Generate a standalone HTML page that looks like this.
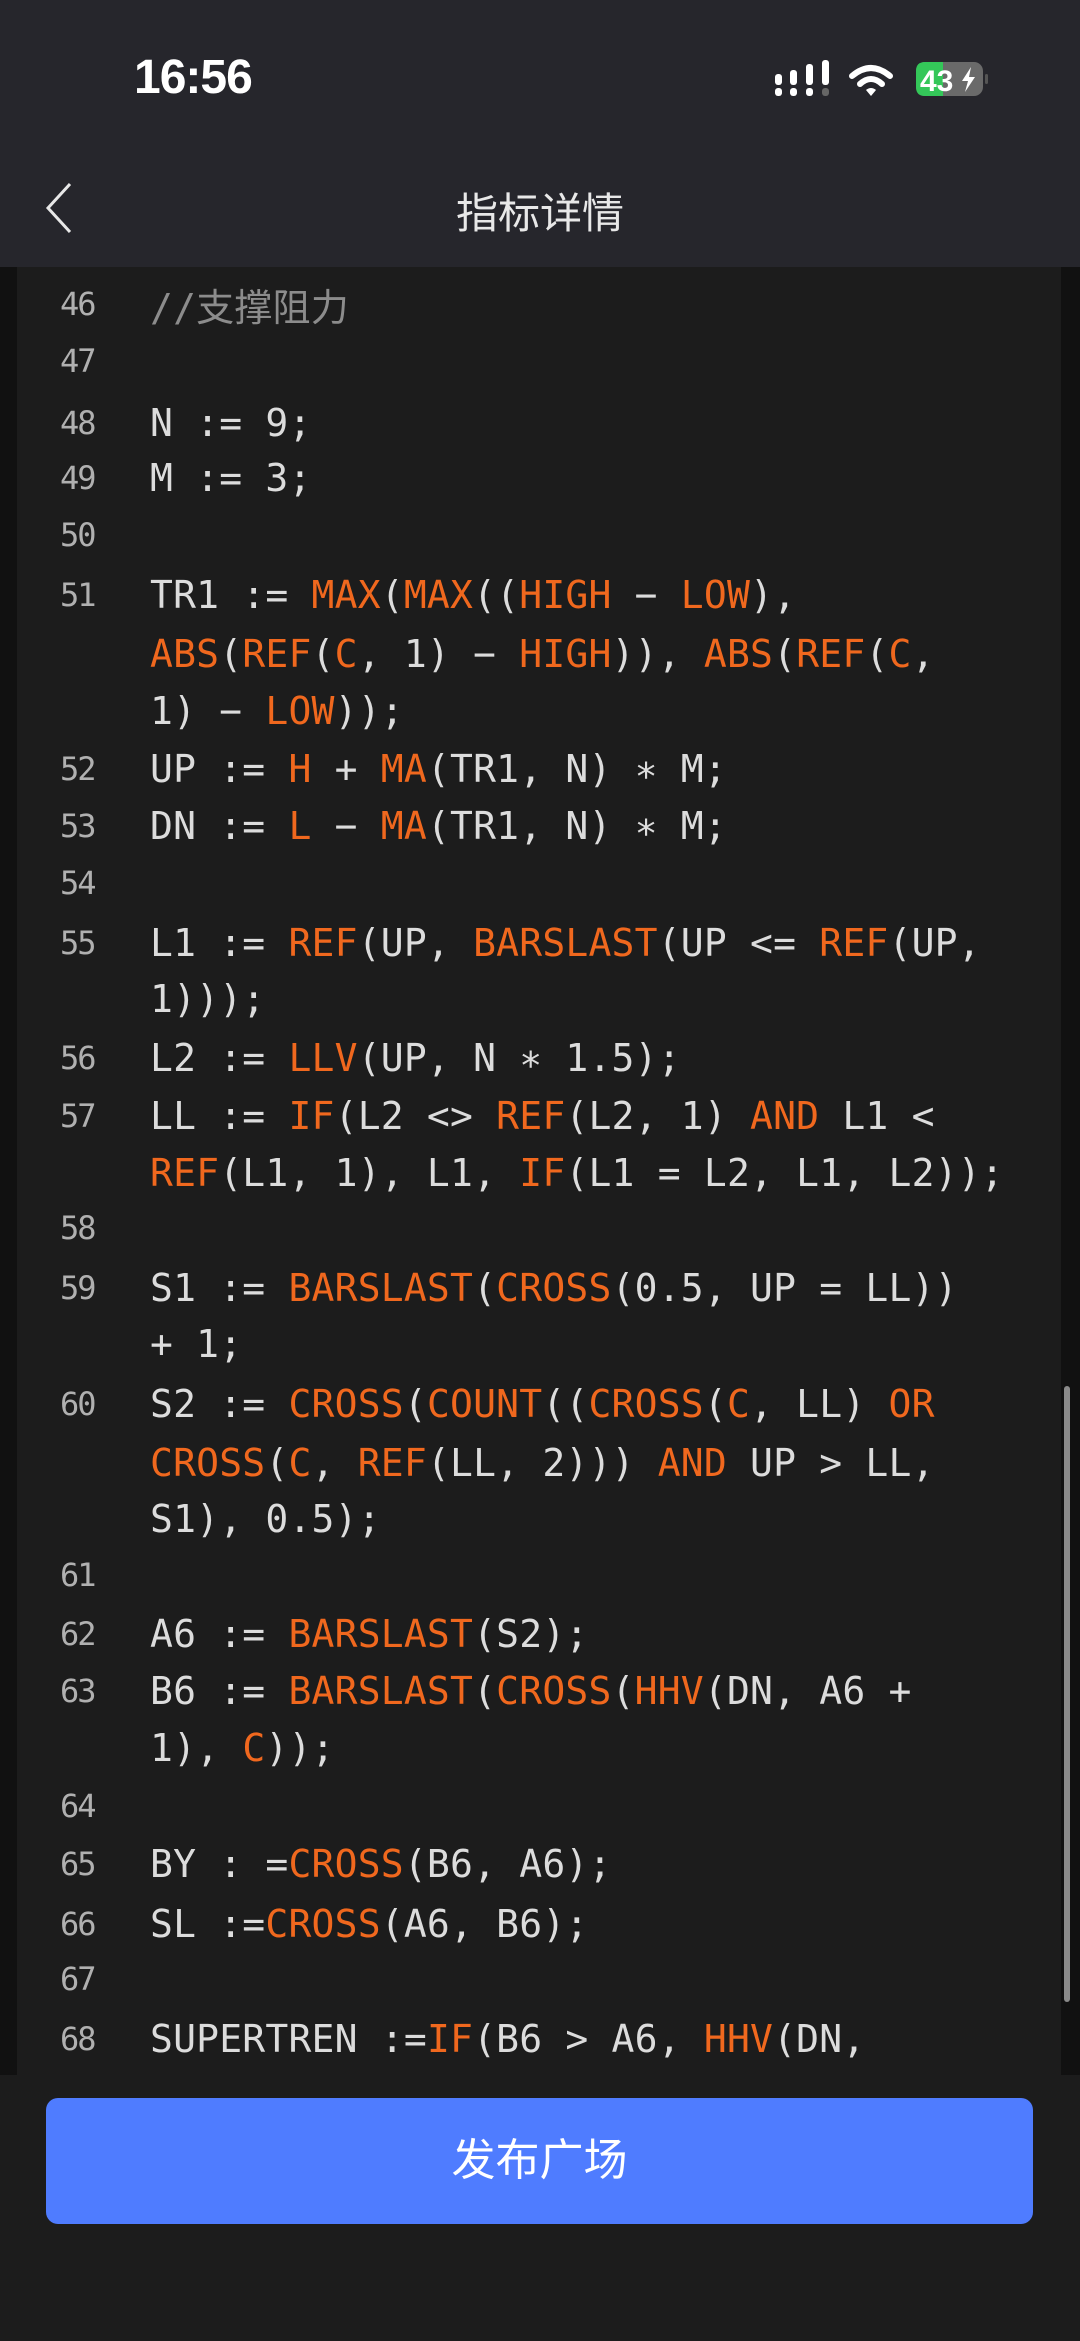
<!DOCTYPE html>
<html><head><meta charset="utf-8"><style>
*{margin:0;padding:0;box-sizing:border-box}
body{width:1080px;height:2341px;background:#1c1c1c;position:relative;overflow:hidden;font-family:"Liberation Sans","Noto Sans CJK SC",sans-serif}
.top{position:absolute;left:0;top:0;width:1080px;height:267px;background:#26262c}
.time{position:absolute;left:134px;top:50px;font-size:48px;font-weight:bold;color:#fff;letter-spacing:-1px}
.title{position:absolute;left:0;width:1080px;top:180px;text-align:center;color:#e8e8e8;font-size:42px}
.panel{position:absolute;left:17px;top:267px;width:1044px;height:1808px;background:#1c1c1c}
.lside{position:absolute;left:0;top:267px;width:17px;height:1808px;background:#111}
.rside{position:absolute;left:1061px;top:267px;width:19px;height:1808px;background:#111}
.r{position:absolute;left:150px;height:50px;line-height:50px;font-family:"DejaVu Sans Mono","Liberation Mono","Noto Sans CJK SC",monospace;font-size:38px;letter-spacing:0.2px;color:#dcdcdc;white-space:pre}
.n{position:absolute;left:60px;height:50px;line-height:50px;font-family:"DejaVu Sans Mono",monospace;font-size:32px;letter-spacing:-2px;color:#b0b0b0}
.o{color:#f0681e}
.c{color:#8c8c8c}
.btn{position:absolute;left:46px;top:2098px;width:987px;height:126px;background:#4f7cff;border-radius:12px;color:#fff;font-size:44px;text-align:center;line-height:126px}
.sb{position:absolute;left:1064px;top:1386px;width:6px;height:616px;background:#8a8a8a;border-radius:3px}
</style></head><body>
<div class="top"></div>
<div class="time">16:56</div>
<svg style="position:absolute;left:770px;top:58px" width="220" height="44">
<g fill="#fff">
<rect x="5" y="16" width="7" height="11" rx="3"/><rect x="20" y="12" width="7" height="15" rx="3"/><rect x="36" y="6" width="7" height="21" rx="3"/><rect x="52" y="2" width="7" height="25" rx="3"/>
<rect x="5" y="30" width="7" height="8" rx="3"/><rect x="20" y="30" width="7" height="8" rx="3"/><rect x="36" y="30" width="7" height="8" rx="3"/>
</g><rect x="52" y="30" width="7" height="8" rx="3" fill="#666"/>
<g fill="none" stroke="#fff" stroke-width="6" stroke-linecap="round"><path d="M82 18 Q101 2 120 18"/><path d="M90 26 Q101 16 112 26"/></g>
<path d="M96 32 L101 38 L106 32 Q101 28 96 32Z" fill="#fff"/>
<rect x="146" y="4" width="67" height="34" rx="9" fill="#6a6a6a"/>
<path d="M155 4 H173 V38 H155 Q146 38 146 29 V13 Q146 4 155 4Z" fill="#34c759"/>
<rect x="215" y="16" width="3" height="10" rx="1.5" fill="#555"/>
<text x="150" y="33" font-family="Liberation Sans" font-weight="bold" font-size="30" fill="#fff">43</text>
<path d="M201 9 L192 23 H198 L195 34 L205 19 H199 Z" fill="#fff"/>
</svg>
<svg style="position:absolute;left:40px;top:180px" width="40" height="56"><path d="M30 4 L8 28 L30 52" fill="none" stroke="#e8e8e8" stroke-width="3"/></svg>
<div class="title">指标详情</div>
<div class="lside"></div><div class="rside"></div>
<div class="panel"></div>
<div class="sb"></div>

<div class="n" style="top:279px">46</div><div class="r c" style="top:283px">//支撑阻力</div>
<div class="n" style="top:336px">47</div>
<div class="n" style="top:398px">48</div><div class="r" style="top:398px">N := 9;</div>
<div class="n" style="top:453px">49</div><div class="r" style="top:453px">M := 3;</div>
<div class="n" style="top:510px">50</div>
<div class="n" style="top:570px">51</div><div class="r" style="top:570px">TR1 := <span class="o">MAX</span>(<span class="o">MAX</span>((<span class="o">HIGH</span> − <span class="o">LOW</span>),</div>
<div class="r" style="top:629px"><span class="o">ABS</span>(<span class="o">REF</span>(<span class="o">C</span>, 1) − <span class="o">HIGH</span>)), <span class="o">ABS</span>(<span class="o">REF</span>(<span class="o">C</span>,</div>
<div class="r" style="top:686px">1) − <span class="o">LOW</span>));</div>
<div class="n" style="top:744px">52</div><div class="r" style="top:744px">UP := <span class="o">H</span> + <span class="o">MA</span>(TR1, N) ∗ M;</div>
<div class="n" style="top:801px">53</div><div class="r" style="top:801px">DN := <span class="o">L</span> − <span class="o">MA</span>(TR1, N) ∗ M;</div>
<div class="n" style="top:858px">54</div>
<div class="n" style="top:918px">55</div><div class="r" style="top:918px">L1 := <span class="o">REF</span>(UP, <span class="o">BARSLAST</span>(UP &lt;= <span class="o">REF</span>(UP,</div>
<div class="r" style="top:974px">1)));</div>
<div class="n" style="top:1033px">56</div><div class="r" style="top:1033px">L2 := <span class="o">LLV</span>(UP, N ∗ 1.5);</div>
<div class="n" style="top:1091px">57</div><div class="r" style="top:1091px">LL := <span class="o">IF</span>(L2 &lt;&gt; <span class="o">REF</span>(L2, 1) <span class="o">AND</span> L1 &lt;</div>
<div class="r" style="top:1148px"><span class="o">REF</span>(L1, 1), L1, <span class="o">IF</span>(L1 = L2, L1, L2));</div>
<div class="n" style="top:1203px">58</div>
<div class="n" style="top:1263px">59</div><div class="r" style="top:1263px">S1 := <span class="o">BARSLAST</span>(<span class="o">CROSS</span>(0.5, UP = LL))</div>
<div class="r" style="top:1319px">+ 1;</div>
<div class="n" style="top:1379px">60</div><div class="r" style="top:1379px">S2 := <span class="o">CROSS</span>(<span class="o">COUNT</span>((<span class="o">CROSS</span>(<span class="o">C</span>, LL) <span class="o">OR</span></div>
<div class="r" style="top:1438px"><span class="o">CROSS</span>(<span class="o">C</span>, <span class="o">REF</span>(LL, 2))) <span class="o">AND</span> UP &gt; LL,</div>
<div class="r" style="top:1494px">S1), 0.5);</div>
<div class="n" style="top:1550px">61</div>
<div class="n" style="top:1609px">62</div><div class="r" style="top:1609px">A6 := <span class="o">BARSLAST</span>(S2);</div>
<div class="n" style="top:1666px">63</div><div class="r" style="top:1666px">B6 := <span class="o">BARSLAST</span>(<span class="o">CROSS</span>(<span class="o">HHV</span>(DN, A6 +</div>
<div class="r" style="top:1723px">1), <span class="o">C</span>));</div>
<div class="n" style="top:1781px">64</div>
<div class="n" style="top:1839px">65</div><div class="r" style="top:1839px">BY : =<span class="o">CROSS</span>(B6, A6);</div>
<div class="n" style="top:1899px">66</div><div class="r" style="top:1899px">SL :=<span class="o">CROSS</span>(A6, B6);</div>
<div class="n" style="top:1954px">67</div>
<div class="n" style="top:2014px">68</div><div class="r" style="top:2014px">SUPERTREN :=<span class="o">IF</span>(B6 &gt; A6, <span class="o">HHV</span>(DN,</div>

<div class="btn">发布广场</div>
</body></html>
